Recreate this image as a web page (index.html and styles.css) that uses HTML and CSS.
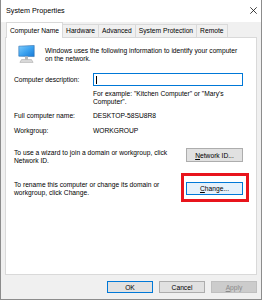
FILE: index.html
```html
<!DOCTYPE html>
<html lang="en">
<head>
  <meta charset="UTF-8" />
  <title>System Properties</title>
  <link rel="stylesheet" href="styles.css">
</head>
<body>
  <div class="window">
    <div class="titlebar">
      <span class="title">System Properties</span>
      <svg class="close" width="7" height="7" viewBox="0 0 7 7">
        <path d="M0.3 0.3L6.7 6.7M6.7 0.3L0.3 6.7" stroke="#111" stroke-width="0.8" fill="none"/>
      </svg>
    </div>

    <div class="tabs">
      <div class="tab active">Computer Name</div>
      <div class="tab">Hardware</div>
      <div class="tab">Advanced</div>
      <div class="tab">System Protection</div>
      <div class="tab">Remote</div>
    </div>

    <div class="panel">
      <div class="intro">
        <svg class="pc-icon" width="17" height="18" viewBox="0 0 17 18">
          <defs>
            <linearGradient id="screen" x1="0" y1="0" x2="1" y2="1">
              <stop offset="0" stop-color="#7fcbfa"/>
              <stop offset="0.5" stop-color="#3ea4f0"/>
              <stop offset="1" stop-color="#1679d6"/>
            </linearGradient>
          </defs>
          <path d="M0.8 1.2L16.2 0.4V11.6L0.8 11.2Z" fill="url(#screen)" stroke="#2f6fae" stroke-width="0.6"/>
          <path d="M7 11.4h3v3.2H7z" fill="#b9b9b9"/>
          <path d="M3.5 14.6h10l1.6 2.8H1.9z" fill="#dcdcdc" stroke="#9d9d9d" stroke-width="0.5"/>
        </svg>
        <p>Windows uses the following information to identify your computer on the network.</p>
      </div>

      <div class="field desc">
        <span>Computer description:</span>
        <div class="input"><span class="caret"></span></div>
      </div>
      <p class="hint">For example: "Kitchen Computer" or "Mary's Computer".</p>

      <div class="field name">
        <span>Full computer name:</span>
        <span>DESKTOP-58SU8R8</span>
      </div>
      <div class="field group">
        <span>Workgroup:</span>
        <span>WORKGROUP</span>
      </div>

      <div class="action">
        <p>To use a wizard to join a domain or workgroup, click Network ID.</p>
        <button class="btn"><u>N</u>etwork ID...</button>
      </div>

      <div class="action change">
        <p>To rename this computer or change its domain or workgroup, click Change.</p>
        <div class="highlight">
          <button class="btn focus"><u>C</u>hange...</button>
        </div>
      </div>
    </div>

    <div class="footer">
      <button class="btn default">OK</button>
      <button class="btn">Cancel</button>
      <button class="btn" disabled><u>A</u>pply</button>
    </div>
  </div>
</body>
</html>
```

FILE: styles.css
```css
body {
  margin: 0;
  font-family: "Liberation Sans", Arial, sans-serif;
  font-size: 6.7px;
  color: #000;
  background: #fff;
}
p {
  margin: 0;
}
.window {
  width: 260px;
  height: 299px;
  background: #f0f0f0;
  border: 1px solid #8c8c8c;
  border-top: none;
  display: flex;
  flex-direction: column;
}
.titlebar {
  height: 22px;
  box-sizing: border-box;
  padding: 0 4px 1px 5px;
  background: #fff;
  display: flex;
  align-items: center;
  justify-content: space-between;
}
.title {
  font-size: 7.2px;
}

/* tabs */
.tabs {
  height: 15px;
  padding-left: 5px;
  display: flex;
  align-items: flex-end;
}
.tab {
  height: 12px;
  line-height: 12px;
  padding: 0 3px;
  border: 1px solid #d9d9d9;
  border-bottom: none;
  margin-left: -1px;
  background: #f0f0f0;
}
.tab:first-child {
  margin-left: 0;
}
.tab.active {
  height: 15px;
  line-height: 15px;
  margin-bottom: -1px;
  background: #fff;
  position: relative;
  z-index: 1;
}

/* tab page */
.panel {
  height: 238px;
  box-sizing: border-box;
  margin: 0 4px;
  padding: 7px 13px 0 8px;
  background: #fff;
  border: 1px solid #d9d9d9;
}
.intro {
  display: flex;
  align-items: flex-start;
  gap: 10px;
  padding-left: 4px;
}
.pc-icon {
  flex: none;
}
.intro p {
  width: 200px;
  flex: none;
  margin-top: 2px;
  line-height: 8px;
}
.field {
  display: grid;
  grid-template-columns: 79px auto;
  align-items: center;
  line-height: 8px;
}
.desc {
  margin-top: 10px;
}
.input {
  width: 150px;
  height: 13px;
  box-sizing: border-box;
  border: 1px solid #0078d7;
  background: #fff;
  padding: 2px 0 0 2px;
}
.caret {
  display: block;
  width: 1px;
  height: 8px;
  background: #000;
}
.hint {
  margin: 4px 0 0 79px;
  width: 145px;
  line-height: 8px;
}
.name {
  margin-top: 6px;
}
.group {
  margin-top: 7px;
}
.action {
  display: flex;
  justify-content: space-between;
  align-items: flex-start;
  margin-top: 13px;
}
.action p {
  width: 165px;
  margin-top: 1px;
  line-height: 8.4px;
}
.action.change {
  margin-top: 15px;
}
.change p {
  margin-top: 0;
}

/* buttons */
.btn {
  width: 57px;
  height: 14px;
  box-sizing: border-box;
  padding: 0;
  font: inherit;
  color: #000;
  background: #e1e1e1;
  border: 1px solid #adadad;
}
.btn.focus {
  height: 13px;
  background: #e5f1fb;
  border-color: #0078d7;
}
.highlight {
  position: relative;
  margin-top: 1px;
}
.highlight::after {
  content: "";
  position: absolute;
  top: -9px;
  right: -6px;
  bottom: -7px;
  left: -5px;
  border: 3px solid #e8141c;
}
.footer {
  display: flex;
  justify-content: flex-end;
  gap: 6px;
  padding: 6px 4px 0 0;
}
.footer .btn {
  width: 46px;
  height: 12px;
}
.btn.default {
  border-color: #0078d7;
}
.btn:disabled {
  background: #cccccc;
  border-color: #bfbfbf;
  color: #8a8a8a;
}
```
